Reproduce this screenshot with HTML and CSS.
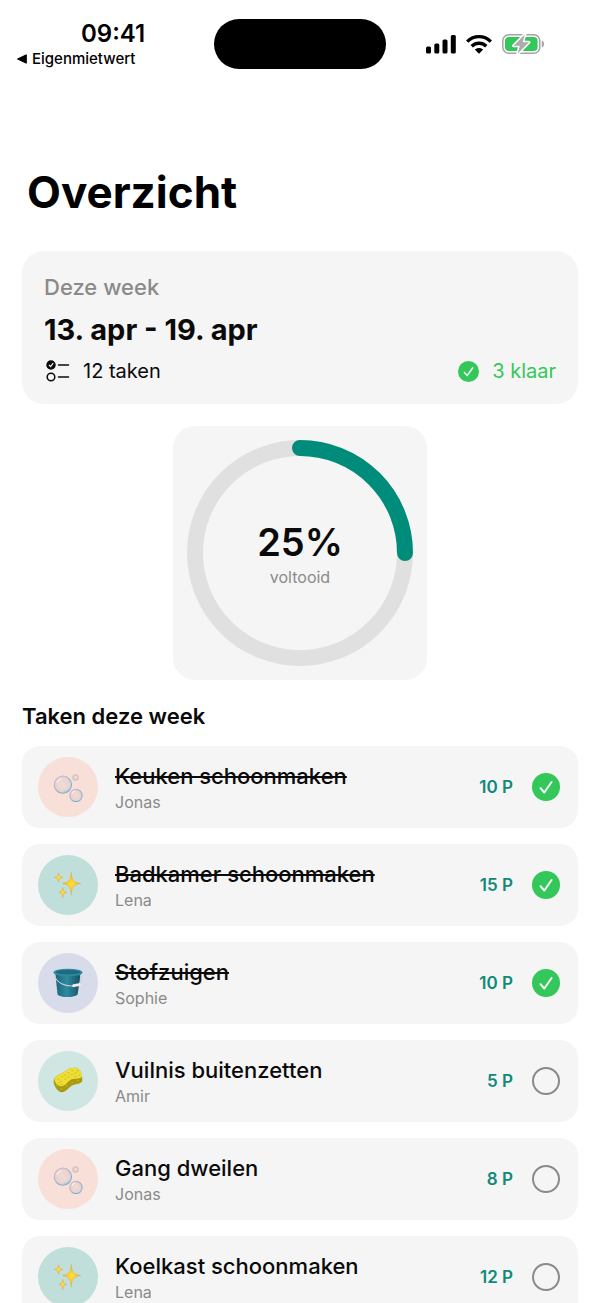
FILE: index.html
```html
<!DOCTYPE html>
<html lang="nl">

<head>
  <meta charset="UTF-8" />
  <meta name="viewport" content="width=device-width, initial-scale=1.0" />
  <title>Overzicht</title>
  <link rel="stylesheet" href="styles.css">
</head>

<body>
  <!-- Shared icons -->
  <svg class="sprite" aria-hidden="true">
    <defs>
      <linearGradient id="bubbleEdge" x1="0" y1="0" x2="1" y2="1">
        <stop offset="0" stop-color="#efb0cc" />
        <stop offset="0.35" stop-color="#b4b0c8" />
        <stop offset="0.75" stop-color="#74b4cd" />
        <stop offset="1" stop-color="#b3a5cf" />
      </linearGradient>
      <radialGradient id="bubbleFill">
        <stop offset="0" stop-color="#f2dbd5" />
        <stop offset="0.7" stop-color="#ebd4cf" />
        <stop offset="1" stop-color="#dccfd6" />
      </radialGradient>
      <radialGradient id="starFill">
        <stop offset="0" stop-color="#ffe23a" />
        <stop offset="0.5" stop-color="#fbc928" />
        <stop offset="1" stop-color="#e39a3c" />
      </radialGradient>
      <linearGradient id="bucketFill" x1="0" y1="0" x2="1" y2="0">
        <stop offset="0" stop-color="#1d6478" />
        <stop offset="0.45" stop-color="#2c8ba0" />
        <stop offset="1" stop-color="#175062" />
      </linearGradient>
    </defs>
    <symbol id="bubbles" viewBox="0 0 32 32">
      <g fill="url(#bubbleFill)" stroke="url(#bubbleEdge)">
        <circle cx="10.5" cy="13.5" r="9.2" stroke-width="1.2" />
        <circle cx="24.5" cy="25" r="6.6" stroke-width="1.1" />
        <circle cx="24" cy="5.8" r="3" stroke="#c3b1ae" stroke-width="0.8" />
      </g>
      <path d="M4.5 11.5A6.6 6.6 0 0 1 9 7.2M20.5 23a4.2 4.2 0 0 1 2.6-2.6" fill="none" stroke="#fbf0ef" stroke-width="1.2" stroke-linecap="round" />
      <path d="M17 18a8 8 0 0 1-5.5 3.200" fill="none" stroke="#8fd0df" stroke-width="1" stroke-linecap="round" />
    </symbol>
    <symbol id="sparkles" viewBox="0 0 32 32">
      <g fill="url(#starFill)" stroke="#dfa045" stroke-width="0.4">
        <path d="M19.5 2.5C20.1 10.8 21.5 13 29.5 14.5C21.5 16 20.1 18.5 19.5 27C18.9 18.5 17.5 16 10 14.5C17.5 13 18.9 10.8 19.5 2.5Z" />
        <path d="M6 3C6.5 6.5 7.2 7.3 10.5 8C7.2 8.7 6.5 9.5 6 13C5.5 9.5 4.8 8.7 1.5 8C4.8 7.3 5.5 6.5 6 3Z" />
        <path d="M10.5 18.5C11 22.5 11.6 23.3 14.8 24C11.6 24.7 11 25.5 10.5 29.5C10 25.5 9.4 24.7 6.2 24C9.4 23.3 10 22.5 10.5 18.5Z" />
      </g>
    </symbol>
    <symbol id="bucket" viewBox="0 0 32 32">
      <path d="M2.5 6L4.800 28C7 32 23.500 32 26.300 28L29.500 6Z" fill="url(#bucketFill)" />
      <ellipse cx="16" cy="4.800" rx="15.500" ry="4" fill="#2d8ba1" />
      <ellipse cx="16" cy="4.400" rx="13" ry="2.400" fill="#1f6a7e" />
      <path d="M1.800 7.500C3 15.500 13 20.500 24 18.800M28 17C30.500 14.500 30.600 11 29 7.500" fill="none" stroke="#c3d2dc" stroke-width="1.200" />
      <path d="M22 18.900L28 17.800" stroke="#f1eeec" stroke-width="3" stroke-linecap="round" />
    </symbol>
    <symbol id="sponge" viewBox="0 0 32 32">
      <path d="M1.500 13C5 8.500 9 8.800 13 5.500C16.500 2.500 24 0 27.500 3.500C30 6 31.500 10 31.200 16C30 19.500 25 18.500 21 20.500C17 22.500 13.500 28.500 8.500 28C4 26 1 21 0.700 17C0.700 15 1 14 1.500 13Z" fill="#a99a10" />
      <path d="M1.500 13C5 8.500 9 8.800 13 5.500C16.500 2.500 24 0 27.500 3.500C30 6 31 8.500 31 11C29 15 23.500 12.500 19.500 14.500C15.500 16.500 13 22 8.500 21.500C4.500 20.500 1.500 18 1.500 13Z" fill="#eedd35" />
      <path d="M5 14h1M9 11.500h1M8 16.500h1M12.500 14h1M12 9.500h1M16 7h1M16 11.500h1M20 5h1M19.500 9h1M23.500 7.500h1M23.500 11h1M26 5h1M27.500 9.500h1M9 19.500h1M5.500 18h1M4 20.500h1M8.500 24.500h1M14 21h1M20 17.500h1M26 15.500h1" stroke="#cdbc22" stroke-width="1" stroke-linecap="round" />
    </symbol>
    <symbol id="tick" viewBox="0 0 28 28">
      <path d="M8.500 15.200L12.300 19.500L19.600 9" fill="none" stroke="currentColor" stroke-width="1.900" stroke-linecap="round" stroke-linejoin="round" />
    </symbol>
  </svg>

  <header class="status-bar">
    <div class="status-left">
      <time class="clock">09:41</time>
      <a href="#" class="back-app">
        <svg width="10" height="10" viewBox="0 0 10 10"><path d="M9.300 0.800V9.200L0.500 5Z" fill="#000" stroke="#000" stroke-linejoin="round" /></svg>
        Eigenmietwert
      </a>
    </div>
    <div class="island"></div>
    <div class="status-icons">
      <svg width="30" height="20" viewBox="0 0 30 20">
        <rect x="0" y="12.500" width="5" height="7" rx="1.500" />
        <rect x="8.300" y="9.500" width="5" height="10" rx="1.500" />
        <rect x="16.500" y="5.500" width="5" height="14" rx="1.500" />
        <rect x="24.800" y="1" width="5" height="18.500" rx="1.500" />
      </svg>
      <svg width="26" height="20" viewBox="0 0 26 20">
        <g fill="none" stroke="#000" stroke-width="3.400">
          <path d="M1.200 7.600C8 1 18 1 24.800 7.600" />
          <path d="M5.700 12.200C10 8.300 16 8.300 20.300 12.200" />
        </g>
        <path d="M8.800 15.600C11.300 13.500 14.700 13.500 17.200 15.600L13 19.800Z" />
      </svg>
      <svg width="43" height="20" viewBox="0 0 43 20">
        <rect x="0.800" y="0.800" width="37" height="18.400" rx="6" fill="none" stroke="#a5a5a5" stroke-width="1.500" />
        <rect x="3" y="3" width="32.600" height="14" rx="4" fill="#34c759" />
        <path d="M39.800 6.500C42.900 7.500 42.900 12.500 39.800 13.500Z" fill="#a5a5a5" />
        <path class="bolt" d="M22.800 0.500L11.500 11.800H17.800L15.800 19.500L27 8.300H20.700Z" />
      </svg>
    </div>
  </header>

  <main>
    <h1>Overzicht</h1>

    <section class="card week-card">
      <h2 class="week-label">Deze week</h2>
      <p class="week-range">13. apr - 19. apr</p>
      <div class="week-stats">
        <span class="stat">
          <svg class="list-icon" width="24" height="22" viewBox="0 0 24 22" fill="none" stroke="#0a0a0a" stroke-width="1.500" stroke-linecap="round">
            <circle cx="5" cy="5" r="4" fill="#0a0a0a" />
            <path d="M3.200 5.200L4.600 6.600L7 3.400" stroke="#f5f5f5" stroke-width="1.200" />
            <circle cx="5" cy="17" r="3.800" />
            <path d="M12.500 5H22.500M12.500 17H22.500" />
          </svg>
          12 taken
        </span>
        <span class="stat stat-done">
          <span class="badge"><svg width="21" height="21"><use href="#tick" /></svg></span>
          3 klaar
        </span>
      </div>
    </section>

    <section class="card ring-card">
      <svg class="ring" viewBox="0 0 226 226" fill="none" stroke-width="16">
        <circle cx="113" cy="113" r="105" stroke="#e0e0e0" />
        <path d="M113 8A105 105 0 0 1 218 113" stroke="#008c7a" stroke-linecap="round" />
      </svg>
      <div class="ring-text">
        <strong>25%</strong>
        <span>voltooid</span>
      </div>
    </section>

    <h2 class="list-title">Taken deze week</h2>
    <ul class="tasks">
      <li class="card task done">
        <span class="avatar peach"><svg><use href="#bubbles" /></svg></span>
        <label class="task-text" for="task1"><span class="task-name">Keuken schoonmaken</span><span class="person">Jonas</span></label>
        <span class="points">10 P</span>
        <span class="check"><input type="checkbox" id="task1" checked><svg><use href="#tick" /></svg></span>
      </li>
      <li class="card task done">
        <span class="avatar mint"><svg><use href="#sparkles" /></svg></span>
        <label class="task-text" for="task2"><span class="task-name">Badkamer schoonmaken</span><span class="person">Lena</span></label>
        <span class="points">15 P</span>
        <span class="check"><input type="checkbox" id="task2" checked><svg><use href="#tick" /></svg></span>
      </li>
      <li class="card task done">
        <span class="avatar lavender"><svg><use href="#bucket" /></svg></span>
        <label class="task-text" for="task3"><span class="task-name">Stofzuigen</span><span class="person">Sophie</span></label>
        <span class="points">10 P</span>
        <span class="check"><input type="checkbox" id="task3" checked><svg><use href="#tick" /></svg></span>
      </li>
      <li class="card task">
        <span class="avatar aqua"><svg><use href="#sponge" /></svg></span>
        <label class="task-text" for="task4"><span class="task-name">Vuilnis buitenzetten</span><span class="person">Amir</span></label>
        <span class="points">5 P</span>
        <span class="check"><input type="checkbox" id="task4"></span>
      </li>
      <li class="card task">
        <span class="avatar peach"><svg><use href="#bubbles" /></svg></span>
        <label class="task-text" for="task5"><span class="task-name">Gang dweilen</span><span class="person">Jonas</span></label>
        <span class="points">8 P</span>
        <span class="check"><input type="checkbox" id="task5"></span>
      </li>
      <li class="card task">
        <span class="avatar mint"><svg><use href="#sparkles" /></svg></span>
        <label class="task-text" for="task6"><span class="task-name">Koelkast schoonmaken</span><span class="person">Lena</span></label>
        <span class="points">12 P</span>
        <span class="check"><input type="checkbox" id="task6"></span>
      </li>
    </ul>
  </main>
</body>

</html>
```
FILE: styles.css
```css
/* Base */
* {
  box-sizing: border-box;
}

body {
  margin: 0;
  height: 100vh;
  overflow: hidden;
  background: #fff;
  color: #0a0a0a;
  font-family: Inter, "Liberation Sans", sans-serif;
}

h1,
h2,
p,
ul {
  margin: 0;
  padding: 0;
}

svg {
  display: block;
}

.sprite {
  position: absolute;
  width: 0;
  height: 0;
}

/* Status bar */
.status-bar {
  display: grid;
  grid-template-columns: 1fr auto 1fr;
  align-items: center;
  padding-top: 19px;
  color: #000;
}

.status-left {
  display: flex;
  flex-direction: column;
  padding-left: 17px;
}

.clock {
  padding-left: 64px;
  font-size: 24px;
  font-weight: 600;
  line-height: 30px;
}

.back-app {
  display: flex;
  align-items: center;
  gap: 5px;
  color: #000;
  font-size: 15px;
  font-weight: 500;
  line-height: 20px;
  text-decoration: none;
}

.island {
  width: 172px;
  height: 50px;
  border-radius: 25px;
  background: #000;
}

.status-icons {
  display: flex;
  align-items: center;
  gap: 10px;
  padding-left: 40px;
}

.bolt {
  fill: #acacac;
  stroke: #fff;
  stroke-width: 3px;
  stroke-linejoin: round;
  paint-order: stroke;
}

/* Content */
main {
  padding: 96px 22px 22px;
}

h1 {
  padding-left: 5px;
  font-size: 44px;
  font-weight: 700;
  line-height: 54px;
  color: #000;
}

.card {
  border-radius: 18px;
  background: #f5f5f5;
}

/* Week summary */
.week-card {
  margin-top: 32px;
  padding: 22px 22px 20px;
  border-radius: 22px;
}

.week-label {
  font-size: 22px;
  font-weight: 500;
  line-height: 28px;
  color: #8a8a8a;
}

.week-range {
  margin-top: 10px;
  font-size: 29px;
  font-weight: 700;
  line-height: 37px;
}

.week-stats {
  display: flex;
  justify-content: space-between;
  margin-top: 10px;
}

.stat {
  display: flex;
  align-items: center;
  gap: 13px;
  font-size: 20px;
  line-height: 26px;
}

.list-icon {
  margin-left: 2px;
}

.stat-done {
  color: #34c759;
}

.badge {
  border-radius: 50%;
  background: #34c759;
  color: #fff;
}

/* Progress ring */
.ring-card {
  display: grid;
  place-items: center;
  width: 254px;
  margin: 22px auto 0;
  padding: 14px;
  border-radius: 22px;
}

.ring,
.ring-text {
  grid-area: 1 / 1;
}

.ring {
  width: 100%;
}

.ring-text {
  display: flex;
  flex-direction: column;
  align-items: center;
}

.ring-text strong {
  font-size: 38px;
  font-weight: 600;
  line-height: 48px;
}

.ring-text span {
  font-size: 16px;
  line-height: 22px;
  color: #8a8a8a;
}

/* Task list */
.list-title {
  margin-top: 22px;
  font-size: 22px;
  font-weight: 600;
  line-height: 28px;
}

.tasks {
  display: flex;
  flex-direction: column;
  gap: 16px;
  margin-top: 16px;
  list-style: none;
}

.task {
  display: flex;
  align-items: center;
  padding: 11px 18px 11px 16px;
}

.avatar {
  display: grid;
  place-items: center;
  width: 60px;
  height: 60px;
  border-radius: 50%;
}

.avatar svg {
  width: 30px;
  height: 30px;
}

.peach {
  background: #f8e0d9;
}

.mint {
  background: #c1dfda;
}

.lavender {
  background: #d8dbea;
}

.aqua {
  background: #cfe6e3;
}

.task-text {
  display: flex;
  flex: 1;
  flex-direction: column;
  align-items: flex-start;
  padding-left: 17px;
}

.task-name {
  font-size: 22px;
  font-weight: 500;
  line-height: 30px;
}

.done .task-name {
  text-decoration: line-through;
  text-decoration-thickness: 2px;
}

.person {
  font-size: 16px;
  line-height: 22px;
  color: #8a8a8a;
}

.points {
  font-size: 17px;
  font-weight: 600;
  color: #108a78;
}

.check {
  display: grid;
  margin-left: 19px;
  color: #fff;
}

.check input,
.check svg {
  grid-area: 1 / 1;
  width: 28px;
  height: 28px;
}

.check input {
  appearance: none;
  margin: 0;
  border: 2px solid #8a8a8a;
  border-radius: 50%;
}

.check input:checked {
  border-color: #34c759;
  background: #34c759;
}

.check svg {
  pointer-events: none;
}
```
